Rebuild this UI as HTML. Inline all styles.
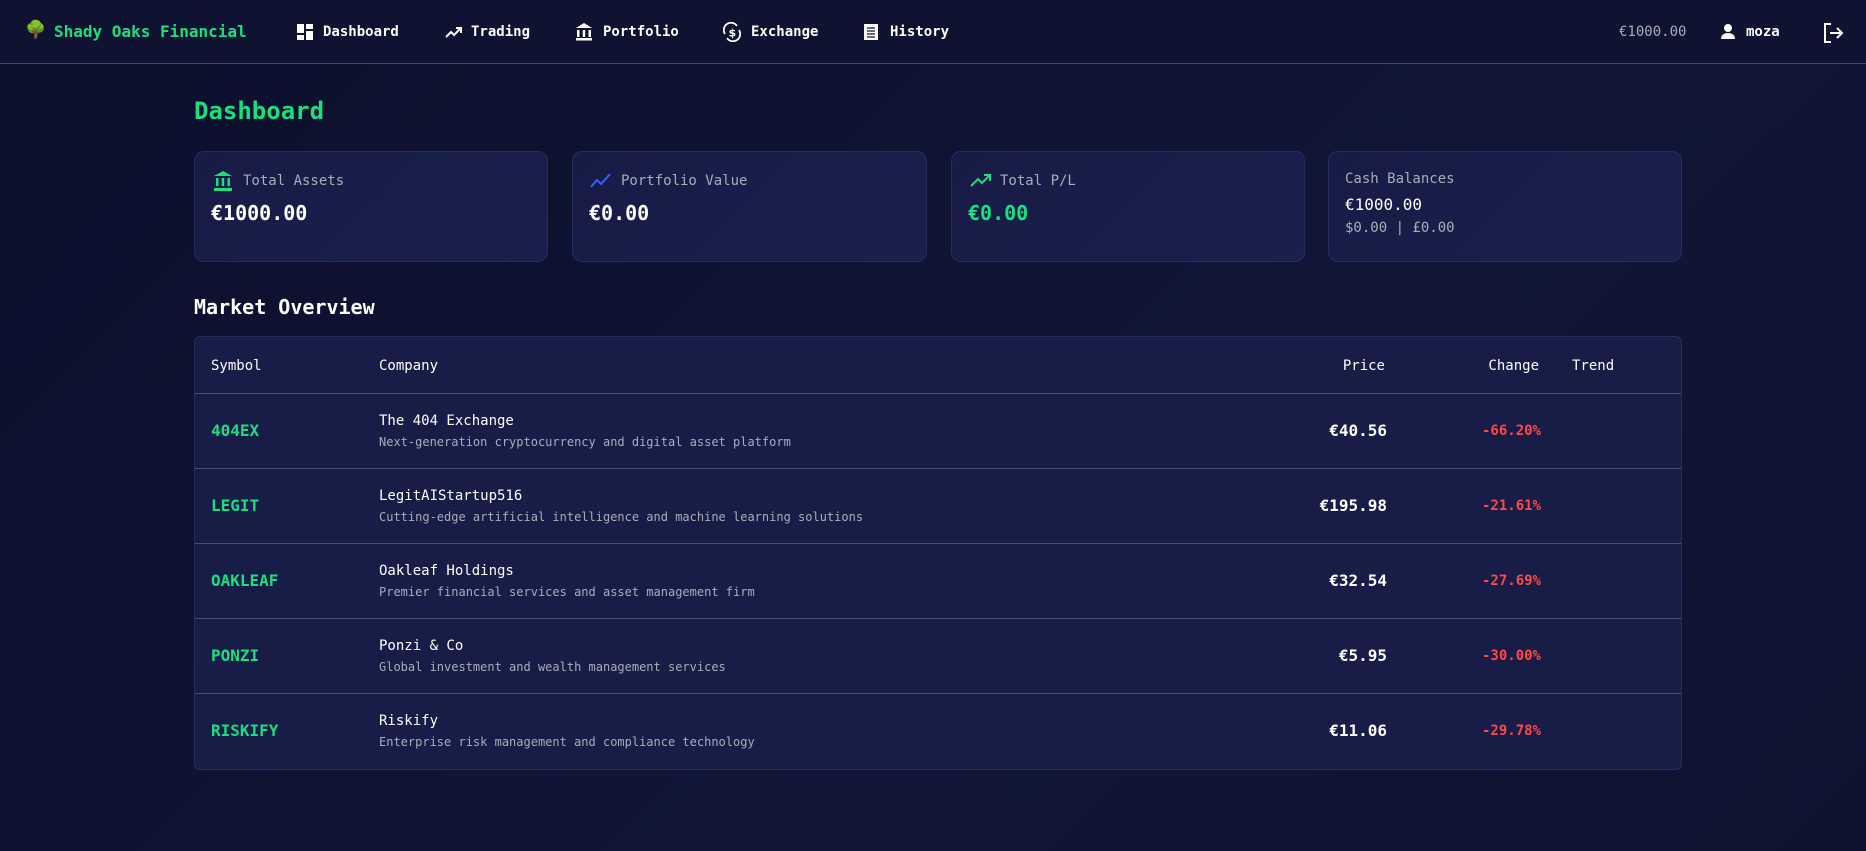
<!DOCTYPE html>
<html><head><meta charset="utf-8"><style>
*{box-sizing:border-box;margin:0;padding:0}
body{width:1866px;height:851px;overflow:hidden;background:linear-gradient(135deg,#0c0f2b,#111638 60%,#0f1330);font-family:"DejaVu Sans Mono","Liberation Mono",monospace;color:#fff;position:relative}
.nav{position:absolute;left:0;top:0;width:1866px;height:64px;background:#0f1331;border-bottom:1px solid #145e4c}
.a{position:absolute;white-space:nowrap}
.ni{position:absolute;top:22px}
.nt{position:absolute;top:22px;font-size:14px;font-weight:bold;line-height:20px;color:#fff}
.card{position:absolute;top:151px;height:111px;border:1px solid #262c5c;border-radius:10px;background:linear-gradient(135deg,#171c46,#1a1f4e)}
.lbl{position:absolute;left:0;font-size:14px;color:#a9acba;line-height:18px}
.val{position:absolute;font-size:20px;font-weight:bold;line-height:24px}
.tbl{position:absolute;left:194px;top:336px;width:1488px;height:434px;border:1px solid #262c5c;border-radius:6px;background:#181d48;overflow:hidden}
.row{position:absolute;left:0;width:1488px;height:75px;border-top:1px solid #4a4e66}
.sym{position:absolute;left:16px;top:27px;font-size:16px;font-weight:bold;color:#18e07e;line-height:20px}
.cn{position:absolute;left:184px;top:18px;font-size:14px;line-height:18px}
.cd{position:absolute;left:184px;top:40px;font-size:12px;color:#a9acba;line-height:16px}
.pr{position:absolute;right:296px;top:27px;font-size:16px;font-weight:bold;line-height:20px}
.ch{position:absolute;right:142px;top:28px;font-size:14px;font-weight:bold;color:#ff4848;line-height:18px}
.th{position:absolute;top:20px;font-size:14px;line-height:18px}
</style></head><body>
<div class="nav">
 <div class="a" style="left:25px;top:20px;font-size:17px">🌳</div>
 <div class="nt" style="left:54px;font-size:16px;color:#18e07e">Shady Oaks Financial</div>
 <svg class="ni" style="left:296px" width="18" height="20" viewBox="0 0 18 20"><rect x="1" y="2" width="7" height="9" fill="#fff"/><rect x="1" y="13" width="7" height="5" fill="#fff"/><rect x="10" y="2" width="7" height="5" fill="#fff"/><rect x="10" y="9" width="7" height="9" fill="#fff"/></svg>
 <div class="nt" style="left:323px">Dashboard</div>
 <svg class="ni" style="left:444px" width="20" height="20" viewBox="0 0 20 20"><path d="M2 15l5-5 3 3 6-6M12 6h5v5" fill="none" stroke="#fff" stroke-width="2"/></svg>
 <div class="nt" style="left:471px">Trading</div>
 <svg class="ni" style="left:574px" width="20" height="20" viewBox="0 0 20 20"><path d="M2 6l8-5 8 5z" fill="#fff"/><rect x="3" y="8" width="2.5" height="7" fill="#fff"/><rect x="8.7" y="8" width="2.5" height="7" fill="#fff"/><rect x="14.5" y="8" width="2.5" height="7" fill="#fff"/><rect x="2" y="16" width="16" height="2.5" fill="#fff"/></svg>
 <div class="nt" style="left:603px">Portfolio</div>
 <svg class="ni" style="left:722px" width="20" height="20" viewBox="0 0 20 20"><path d="M3 12A7 7 0 0 1 15 4M17 8A7 7 0 0 1 5 16" fill="none" stroke="#fff" stroke-width="1.8"/><text x="6.5" y="14.5" font-size="11" font-weight="bold" fill="#fff" font-family="DejaVu Sans">$</text></svg>
 <div class="nt" style="left:751px">Exchange</div>
 <svg class="ni" style="left:862px" width="18" height="20" viewBox="0 0 18 20"><rect x="2" y="2" width="14" height="16" fill="#fff"/><path d="M5 6h8M5 9h8M5 12h8M5 15h8" stroke="#0f1331" stroke-width="1.3"/></svg>
 <div class="nt" style="left:890px">History</div>
 <div class="nt" style="left:1619px;font-weight:normal;color:#a9acba">€1000.00</div>
 <svg class="ni" style="left:1720px" width="16" height="20" viewBox="0 0 16 20"><circle cx="8" cy="6" r="4" fill="#fff"/><path d="M1 17c0-4 3-6 7-6s7 2 7 6z" fill="#fff"/></svg>
 <div class="nt" style="left:1746px">moza</div>
 <svg class="ni" style="left:1822px" width="22" height="22" viewBox="0 0 22 22"><path d="M9 2H3v18h6M8 11h12M15 6l5 5-5 5" fill="none" stroke="#fff" stroke-width="2"/></svg>
</div>

<div class="a" style="left:194px;top:96px;font-size:24px;font-weight:bold;color:#18e07e;line-height:30px">Dashboard</div>

<div class="card" style="left:194px;width:354px">
 <svg class="a" style="left:17px;top:18px" width="22" height="22" viewBox="0 0 22 22"><path d="M2 6l9-5 9 5z" fill="#18e07e"/><rect x="4" y="8" width="2.5" height="8" fill="#18e07e"/><rect x="9.7" y="8" width="2.5" height="8" fill="#18e07e"/><rect x="15.5" y="8" width="2.5" height="8" fill="#18e07e"/><rect x="2" y="18" width="18" height="3" fill="#18e07e"/></svg>
 <div class="lbl" style="left:48px;top:20px">Total Assets</div>
 <div class="val" style="left:16px;top:49px">€1000.00</div>
</div>
<div class="card" style="left:572px;width:355px">
 <svg class="a" style="left:17px;top:20px" width="22" height="18" viewBox="0 0 22 18"><path d="M1 15l6-7 4 4 9-10" fill="none" stroke="#3d5cf5" stroke-width="2"/></svg>
 <div class="lbl" style="left:48px;top:20px">Portfolio Value</div>
 <div class="val" style="left:16px;top:49px">€0.00</div>
</div>
<div class="card" style="left:951px;width:354px">
 <svg class="a" style="left:17px;top:18px" width="24" height="20" viewBox="0 0 24 20"><path d="M2 16l7-7 4 4 8-8M15 5h6v6" fill="none" stroke="#18e07e" stroke-width="2"/></svg>
 <div class="lbl" style="left:48px;top:20px">Total P/L</div>
 <div class="val" style="left:16px;top:49px;color:#18e07e">€0.00</div>
</div>
<div class="card" style="left:1328px;width:354px">
 <div class="lbl" style="left:16px;top:18px">Cash Balances</div>
 <div class="a" style="left:16px;top:43px;font-size:16px;line-height:20px">€1000.00</div>
 <div class="lbl" style="left:16px;top:67px">$0.00 | £0.00</div>
</div>

<div class="a" style="left:194px;top:295px;font-size:20px;font-weight:bold;line-height:24px">Market Overview</div>

<div class="tbl">
 <div class="th" style="left:16px">Symbol</div>
 <div class="th" style="left:184px">Company</div>
 <div class="th" style="right:296px">Price</div>
 <div class="th" style="right:142px">Change</div>
 <div class="th" style="left:1377px">Trend</div>
 <div class="row" style="top:56px"><div class="sym">404EX</div><div class="cn">The 404 Exchange</div><div class="cd">Next-generation cryptocurrency and digital asset platform</div><div class="pr">€40.56</div><div class="ch">-66.20%</div></div>
 <div class="row" style="top:131px"><div class="sym">LEGIT</div><div class="cn">LegitAIStartup516</div><div class="cd">Cutting-edge artificial intelligence and machine learning solutions</div><div class="pr">€195.98</div><div class="ch">-21.61%</div></div>
 <div class="row" style="top:206px"><div class="sym">OAKLEAF</div><div class="cn">Oakleaf Holdings</div><div class="cd">Premier financial services and asset management firm</div><div class="pr">€32.54</div><div class="ch">-27.69%</div></div>
 <div class="row" style="top:281px"><div class="sym">PONZI</div><div class="cn">Ponzi &amp; Co</div><div class="cd">Global investment and wealth management services</div><div class="pr">€5.95</div><div class="ch">-30.00%</div></div>
 <div class="row" style="top:356px"><div class="sym">RISKIFY</div><div class="cn">Riskify</div><div class="cd">Enterprise risk management and compliance technology</div><div class="pr">€11.06</div><div class="ch">-29.78%</div></div>
</div>
</body></html>
